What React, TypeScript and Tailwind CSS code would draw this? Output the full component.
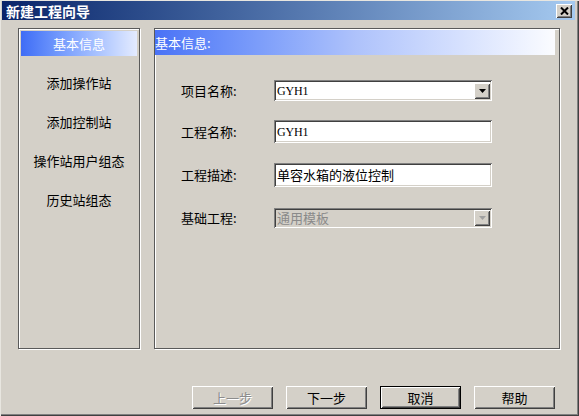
import React from "react";

const cjk = "font-['SimSun','Noto_Sans_CJK_SC',sans-serif]";

const raised =
  "bg-[#d4d0c8] shadow-[inset_1px_1px_0_#ffffff,inset_-1px_-1px_0_#404040,inset_2px_2px_0_#d4d0c8,inset_-2px_-2px_0_#808080]";

const sunken =
  "shadow-[inset_1px_1px_0_#808080,inset_-1px_-1px_0_#ffffff,inset_2px_2px_0_#404040,inset_-2px_-2px_0_#d4d0c8]";

const menuItems = ["添加操作站", "添加控制站", "操作站用户组态", "历史站组态"];

function ComboArrow({ disabled }: { disabled?: boolean }) {
  return (
    <div className={`flex h-[16px] w-[16px] items-center justify-center ${raised}`}>
      <svg width="7" height="4" viewBox="0 0 7 4">
        <polygon points="0,0 7,0 3.5,4" fill={disabled ? "#a0a0a0" : "#000"} />
      </svg>
    </div>
  );
}

function Field({
  label,
  height,
  top,
  value,
  combo,
  disabled,
  latin,
}: {
  label: string;
  height: number;
  top: number;
  value: string;
  combo?: boolean;
  disabled?: boolean;
  latin?: boolean;
}) {
  return (
    <div className="flex items-center" style={{ marginTop: top }}>
      <span className="w-[93px] pl-[26px] text-[13px] text-black">{label}</span>
      <div
        className={`ml-[26px] flex w-[218px] items-center pl-[3px] pr-[2px] ${sunken} ${
          disabled ? "bg-[#d4d0c8]" : "bg-white"
        }`}
        style={{ height }}
      >
        <span
          className={`flex-1 ${
            latin ? "font-['Liberation_Serif',serif] text-[12px] tracking-[-0.2px]" : "text-[13px]"
          } ${disabled ? "text-[#8a8a8a]" : "text-black"}`}
        >
          {value}
        </span>
        {combo && <ComboArrow disabled={disabled} />}
      </div>
    </div>
  );
}

function Button({
  label,
  disabled,
  isDefault,
}: {
  label: string;
  disabled?: boolean;
  isDefault?: boolean;
}) {
  return (
    <div
      className={`flex h-[23px] w-[81px] items-center justify-center text-[13px] ${
        isDefault ? "border border-black" : ""
      } ${raised} ${
        disabled ? "text-[#8c8c8c] [text-shadow:1px_1px_0_#ffffff]" : "text-black"
      }`}
    >
      {label}
    </div>
  );
}

export default function App() {
  return (
    <div
      className={`h-[416px] w-[579px] overflow-hidden bg-[#d4d0c8] px-[2px] pt-[1px] ${cjk} shadow-[inset_1px_1px_0_#e8e6e0,inset_-1px_-1px_0_#404040,inset_-2px_-2px_0_#808080]`}
    >
      {/* title bar */}
      <div className="flex h-[19px] w-[573px] items-center justify-between bg-gradient-to-r from-[#0a246a] to-[#a6caf0] pl-[4px] pr-[3px]">
        <span className="text-[14px] font-bold leading-none text-white">新建工程向导</span>
        <div className={`flex h-[14px] w-[16px] items-center justify-center ${raised}`}>
          <svg width="9" height="8" viewBox="0 0 9 8">
            <path d="M1 0.5L8 7.5M8 0.5L1 7.5" stroke="#000" strokeWidth="2" />
          </svg>
        </div>
      </div>

      {/* panels */}
      <div className="ml-[16px] mt-[8px] flex gap-[14px]">
        <div className="h-[321px] w-[122px] border border-[#5a5a5a] p-[2px] shadow-[1px_1px_0_#ffffff,inset_1px_1px_0_#ffffff]">
          <div className="flex h-[25px] items-center justify-center bg-gradient-to-r from-[#3f6cf6] to-[#e4ebff] text-[13px] text-white">
            基本信息
          </div>
          <div className="mt-[7px]">
            {menuItems.map((item) => (
              <div key={item} className="flex h-[39px] items-center justify-center text-[13px] text-black">
                {item}
              </div>
            ))}
          </div>
        </div>

        <div className="h-[321px] w-[406px] border border-[#5a5a5a] pr-[4px] shadow-[1px_1px_0_#ffffff,inset_1px_1px_0_#ffffff]">
          <div className="mt-[1px] flex h-[25px] items-center bg-gradient-to-r from-[#4a72f6] via-[#aec2fb] to-[#fbfcff] text-[13px] text-white">
            基本信息:
          </div>
          <Field label="项目名称:" top={25} height={21} value="GYH1" combo latin />
          <Field label="工程名称:" top={19} height={23} value="GYH1" latin />
          <Field label="工程描述:" top={20} height={24} value="单容水箱的液位控制" />
          <Field label="基础工程:" top={21} height={20} value="通用模板" combo disabled />
        </div>
      </div>

      {/* buttons */}
      <div className="mt-[37px] flex justify-end gap-[13px] pr-[22px]">
        <Button label="上一步" disabled />
        <Button label="下一步" />
        <Button label="取消" isDefault />
        <Button label="帮助" />
      </div>
    </div>
  );
}
